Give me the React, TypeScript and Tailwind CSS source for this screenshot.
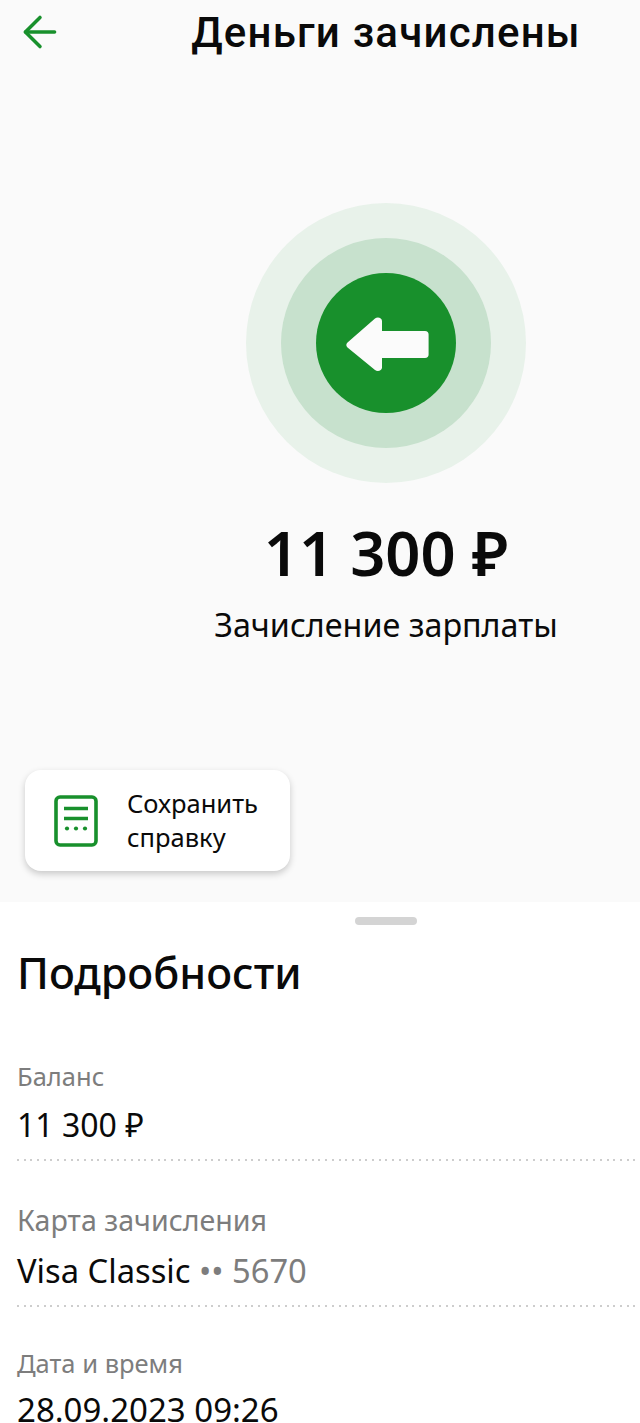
import React from 'react';
import { ArrowLeft } from 'lucide-react';

const sans = 'font-["Noto_Sans","Open_Sans",sans-serif]';

interface DetailRowProps {
  label: string;
  children: React.ReactNode;
  divider?: boolean;
  className?: string;
  labelClassName?: string;
  valueClassName?: string;
}

const DetailRow = ({ label, children, divider = true, className = '', labelClassName = '', valueClassName = '' }: DetailRowProps) => (
  <div className={className}>
    <div className={`leading-[32px] text-[#7d7d7d] whitespace-nowrap ${labelClassName}`}>{label}</div>
    <div className={`leading-[34px] text-[#0a0a0a] whitespace-nowrap ${valueClassName}`}>{children}</div>
    {divider && <div className="mt-[17px] h-[2px] bg-[repeating-linear-gradient(90deg,#cdcdcd_0_2px,transparent_2px_6.7px)]" />}
  </div>
);

const ReceiptIcon = () => (
  <svg width="46" height="52" viewBox="0 0 46 52" fill="none" stroke="#18902c" className="shrink-0">
    <rect x="2" y="2" width="40" height="48" rx="4" strokeWidth="3.6" />
    <path d="M10 13.5h24M10 23.5h24" strokeWidth="3.6" />
    <circle cx="13" cy="33.5" r="2.1" fill="#18902c" stroke="none" />
    <circle cx="22" cy="33.5" r="2.1" fill="#18902c" stroke="none" />
    <circle cx="31" cy="33.5" r="2.1" fill="#18902c" stroke="none" />
  </svg>
);

export default function App() {
  return (
    <div className={`h-[1423px] w-[640px] overflow-hidden bg-white ${sans}`}>
      <section className="h-[902px] bg-[#fafafa] flex flex-col">
        <header className="relative h-[64px] pl-[132px] flex items-center justify-center">
          <ArrowLeft className="absolute left-[15px] top-[7px] text-[#18902c]" size={50} strokeWidth={3.5} absoluteStrokeWidth />
          <h1 className="font-['Roboto'] text-[42px] font-medium leading-[44px] text-[#0a0a0a] mt-[2px] tracking-[1.2px] whitespace-nowrap">Деньги зачислены</h1>
        </header>

        <div className="pl-[132px] flex flex-col items-center mt-[139px]">
          <div className="w-[280px] h-[280px] rounded-full bg-[#e8f2ea] flex items-center justify-center">
            <div className="w-[210px] h-[210px] rounded-full bg-[#c7e1cd] flex items-center justify-center">
              <div className="w-[140px] h-[140px] rounded-full bg-[#18902c] flex items-center justify-center">
                <svg width="84" height="56" viewBox="0 0 84 56" fill="#fbfbfb" className="ml-[1px]">
                  <path d="M2.500 27.500 30 3.500c2.500-2 7-.8 7 2.500V16h43c2.400 0 3.600 1.300 3.600 3.600v20c0 2.300-1.200 3.400-3.600 3.400H37v9.500c0 3.200-4.500 4.500-7 2.500L2.500 32.500c-1.600-1.400-1.600-3.600 0-5z" />
                </svg>
              </div>
            </div>
          </div>
          <div className="mt-[31px] text-[61.500px] leading-[76px] font-semibold text-[#0a0a0a] whitespace-nowrap">11 300 ₽</div>
          <div className="mt-[14px] text-[32.300px] leading-[40px] text-[#0a0a0a] whitespace-nowrap">Зачисление зарплаты</div>
        </div>

        <div className="mt-[126px] ml-[25px] w-[265px] h-[101px] rounded-[16px] bg-white shadow-[0_3px_7px_rgba(0,0,0,0.2)] flex items-center pl-[29px] gap-[27px]">
          <ReceiptIcon />
          <div className="text-[25.500px] leading-[34px] text-[#0a0a0a] -mt-[2px]">
            Сохранить
            <br />
            справку
          </div>
        </div>
      </section>

      <section className="pl-[17px]">
        <div className="pl-[115px] flex justify-center pt-[15px]">
          <div className="w-[62px] h-[8px] rounded-full bg-[#d4d4d4]" />
        </div>
        <h2 className="mt-[19px] text-[43px] leading-[58px] font-medium text-[#0a0a0a]">Подробности</h2>
        <DetailRow label="Баланс" className="mt-[58px]" labelClassName="text-[25.500px]" valueClassName="mt-[16px] text-[32px]">
          11 300 ₽
        </DetailRow>
        <DetailRow label="Карта зачисления" className="mt-[43px]" labelClassName="text-[28.600px]" valueClassName="mt-[18px] text-[32.700px]">
          Visa Classic <span className="text-[#7d7d7d]">•• 5670</span>
        </DetailRow>
        <DetailRow label="Дата и время" divider={false} className="mt-[40px]" labelClassName="text-[25.500px]" valueClassName="mt-[14px] text-[33px]">
          28.09.2023 09:26
        </DetailRow>
      </section>
    </div>
  );
}
